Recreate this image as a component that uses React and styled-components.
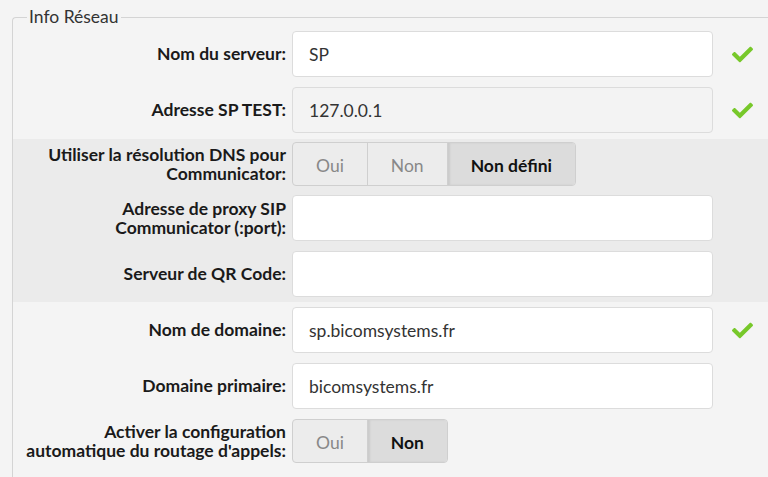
import React from 'react';
import styled, { createGlobalStyle } from 'styled-components';
import { FaCheck } from 'react-icons/fa';

const GlobalStyle = createGlobalStyle`
  html, body {
    margin: 0;
    padding: 0;
    background: #f4f4f4;
    font-family: Lato, "Open Sans", sans-serif;
    color: #222;
    overflow: hidden;
  }
`;

const Page = styled.div`
  padding: 8px 0 0 12px;
`;

const Fieldset = styled.fieldset`
  margin: 0;
  padding: 0 0 20px;
  border: 1px solid #d4d4d4;
  border-right: 0;
  border-radius: 4px 0 0 4px;
  min-width: 0;
`;

const Legend = styled.legend`
  margin-left: 14px;
  padding: 0 2px;
  font-size: 17.5px;
  line-height: 18px;
  color: #333;
`;

const Row = styled.div`
  display: grid;
  grid-template-columns: 273px 421px 40px;
  column-gap: 6px;
  align-items: center;
  padding: 5px 0;
`;

const Group = styled.div`
  background: #ebebeb;
  margin-top: 1px;

  & > ${Row}:first-child {
    padding: 3px 0 4px;
  }
`;

const Label = styled.label`
  text-align: right;
  font-weight: 700;
  font-size: 17.5px;
  line-height: 19.5px;
  color: #1a1a1a;
`;

const Input = styled.input`
  box-sizing: border-box;
  width: 100%;
  height: 46px;
  padding: 0 16px;
  border: 1px solid #dcdcdc;
  border-radius: 4px;
  background: ${(p) => (p.disabled ? '#f3f3f3' : '#fff')};
  font-family: inherit;
  font-size: 17.5px;
  color: #333;
  outline: none;
`;

const Status = styled.span`
  display: flex;
  align-items: center;
  padding-left: 13px;
  color: #77c82a;
`;

const Toggle = styled.div`
  box-sizing: border-box;
  display: inline-flex;
  justify-self: start;
  height: 44px;
  border: 1px solid #cfcfcf;
  border-radius: 4px;
  overflow: hidden;
  background: #ececec;
`;

const ToggleButton = styled.button`
  padding: 2px 23px 0;
  border: 0;
  border-left: 1px solid #cfcfcf;
  background: ${(p) => (p.$active ? '#dcdcdc' : 'transparent')};
  box-shadow: ${(p) => (p.$active ? 'inset 2px 0 2px rgba(0,0,0,0.08)' : 'none')};
  font-family: inherit;
  font-size: 17.5px;
  font-weight: ${(p) => (p.$active ? 700 : 400)};
  color: ${(p) => (p.$active ? '#111' : '#888')};
  cursor: pointer;

  &:first-child {
    border-left: 0;
  }
`;

const Check = () => (
  <Status>
    <FaCheck size={21} />
  </Status>
);

const TextRow = ({ label, value = '', ok, disabled }) => (
  <Row>
    <Label>{label}</Label>
    <Input defaultValue={value} disabled={disabled} />
    {ok ? <Check /> : <span />}
  </Row>
);

const ChoiceRow = ({ label, options, active }) => (
  <Row>
    <Label>{label}</Label>
    <Toggle>
      {options.map((o) => (
        <ToggleButton key={o} $active={o === active}>
          {o}
        </ToggleButton>
      ))}
    </Toggle>
    <span />
  </Row>
);

const multiline = (a, b) => (
  <>
    {a}
    <br />
    {b}
  </>
);

export default function App() {
  return (
    <>
      <GlobalStyle />
      <Page>
        <Fieldset>
          <Legend>Info Réseau</Legend>
          <TextRow label="Nom du serveur:" value="SP" ok />
          <TextRow label="Adresse SP TEST:" value="127.0.0.1" ok disabled />
          <Group>
            <ChoiceRow
              label={multiline('Utiliser la résolution DNS pour', 'Communicator:')}
              options={['Oui', 'Non', 'Non défini']}
              active="Non défini"
            />
            <TextRow label={multiline('Adresse de proxy SIP', 'Communicator (:port):')} />
            <TextRow label="Serveur de QR Code:" />
          </Group>
          <TextRow label="Nom de domaine:" value="sp.bicomsystems.fr" ok />
          <TextRow label="Domaine primaire:" value="bicomsystems.fr" />
          <ChoiceRow
            label={multiline('Activer la configuration', "automatique du routage d'appels:")}
            options={['Oui', 'Non']}
            active="Non"
          />
        </Fieldset>
      </Page>
    </>
  );
}
